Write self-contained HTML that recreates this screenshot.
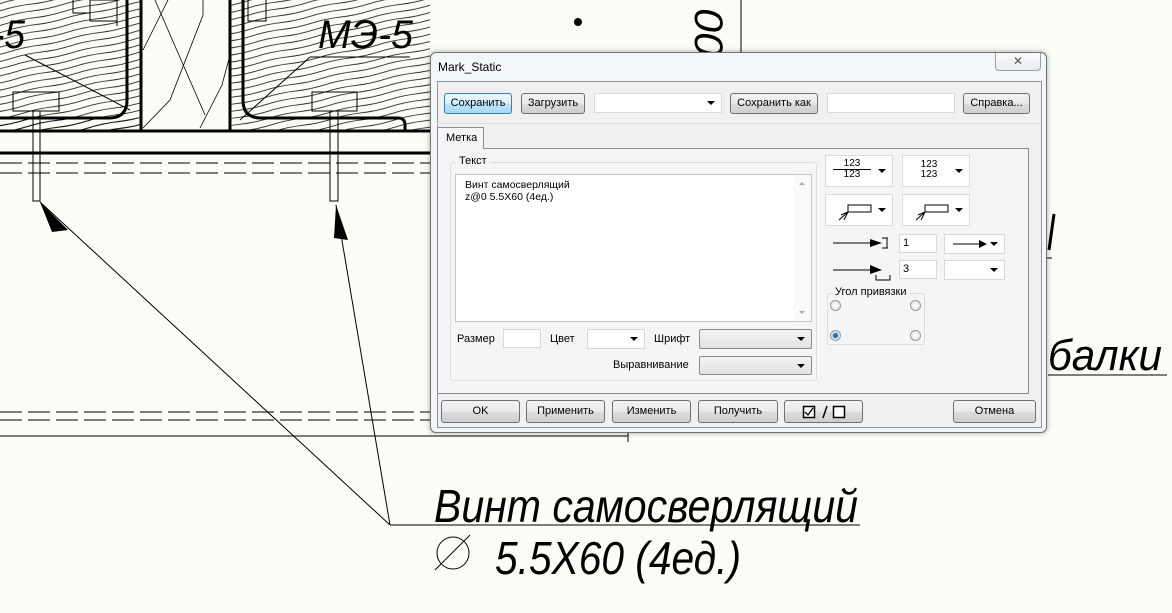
<!DOCTYPE html>
<html><head><meta charset="utf-8">
<style>
*{margin:0;padding:0;box-sizing:border-box}
body{width:1172px;height:613px;overflow:hidden;background:#fdfdf8;position:relative;font-family:"Liberation Sans",sans-serif;font-size:11px;color:#000}
svg.d{position:absolute;left:0;top:0}
.a{position:absolute}
.win{position:absolute;left:430px;top:52px;width:617px;height:381px;border:1px solid #6f7378;border-radius:6px;background:#f3f6fa;box-shadow:0 0 6px rgba(0,0,0,.35)}
.btn{position:absolute;border:1px solid #707070;border-radius:3px;background:linear-gradient(#f2f2f2,#ebebeb 50%,#dddddd 51%,#cfcfcf);text-align:center;font-size:11px;line-height:19px}
.fld{position:absolute;background:#fff;border:1px solid #d6d9dd}
.cmb{position:absolute;background:#fff;border:1px solid #d6d9dd}
.cmb:after,.tri:after{content:"";position:absolute;right:6px;top:50%;margin-top:-2px;border-left:4px solid transparent;border-right:4px solid transparent;border-top:4px solid #000}
.cmbg{position:absolute;border:1px solid #8a8a8a;border-radius:2px;background:linear-gradient(#f3f3f3,#e2e2e2)}
.cmbg:after{content:"";position:absolute;right:6px;top:50%;margin-top:-2px;border-left:4px solid transparent;border-right:4px solid transparent;border-top:4px solid #000}
.ib{position:absolute;background:#fff;border:1px solid #dcdcdc}
.rad{position:absolute;width:11px;height:11px;border-radius:50%;border:1px solid #9a9a9a;background:radial-gradient(#fff,#e0e0e0)}
</style></head><body>
<svg class="d" width="1172" height="613" viewBox="0 0 1172 613">
<defs>
<pattern id="h" width="60" height="7" patternUnits="userSpaceOnUse" patternTransform="rotate(-12)">
<path d="M0 3.5 Q15 2 30 3.5 T60 3.5" stroke="#000" stroke-width="0.8" fill="none"/>
</pattern>
</defs>
<rect x="0" y="0" width="141" height="131" fill="url(#h)"/>
<rect x="230" y="0" width="200" height="131" fill="url(#h)"/>
<rect x="0" y="118" width="141" height="13" fill="url(#h)"/>
<g stroke="#000" fill="none">
<path d="M127 0 V100 Q127 118 109 118 H0" stroke-width="3"/>
<path d="M243 0 V100 Q243 118 261 118 H398 Q405 118 405 125 V131" stroke-width="3"/>
<path d="M141 0 V131 M230 0 V131" stroke-width="3"/>
<path d="M0 131 H430 M0 153 H430" stroke-width="3"/>
<path d="M0 163 H430 M0 173 H430 M0 412 H430 M0 420 H430" stroke-width="1" stroke-dasharray="22,6"/>
<path d="M0 436 H628 M628 433 V442 M741 0 V52" stroke-width="1"/>
<rect x="13" y="92" width="46" height="19" stroke-width="1"/>
<rect x="312" y="92" width="45" height="19" stroke-width="1"/>
<rect x="90" y="0" width="27" height="21" stroke-width="1"/>
<path d="M73 0 V13 H90 M117 0 V26" stroke-width="1"/>
<rect x="248" y="-1" width="18" height="22" stroke-width="1"/>
<path d="M33 111 V201 H40 V111 M330 111 V201 H338 V111" stroke-width="1"/>
<path d="M40 202 L390 525 M336 205 L390 525 M390 525 H860" stroke-width="1"/>
<path d="M25 55 L130 110 M310 57 H410 M310 57 L240 120" stroke-width="1"/>
<path d="M155 0 L205 115 M168 0 L143 50 M203 0 V15 L170 100 L143 128 M230 55 L222 85 L200 128" stroke-width="0.8"/>
<path d="M1045 258 H1052 M1048 375 H1167" stroke-width="1"/>
<path d="M1054 214 L1049 250" stroke-width="3"/>
<circle cx="453" cy="553" r="16" stroke-width="1"/>
<path d="M435 570 L470 535" stroke-width="1"/>
</g>
<path d="M40 202 L68 230 L52 232 Z M336 205 L348 240 L334 238 Z" fill="#000"/>
<circle cx="578" cy="22" r="4" fill="#000"/>
<g font-family="Liberation Sans,sans-serif" font-style="italic" fill="#000">
<text x="318" y="48" font-size="40" textLength="95" lengthAdjust="spacingAndGlyphs">МЭ-5</text>
<text x="-8" y="48" font-size="40" textLength="33" lengthAdjust="spacingAndGlyphs">-5</text>
<text x="434" y="522" font-size="46" textLength="424" lengthAdjust="spacingAndGlyphs">Винт самосверлящий</text>
<text x="495" y="574" font-size="46" textLength="246" lengthAdjust="spacingAndGlyphs">5.5X60 (4ед.)</text>
<text x="1048" y="370" font-size="44" textLength="114" lengthAdjust="spacingAndGlyphs">балки</text>
<text transform="translate(695,8) rotate(90)" font-size="40" textLength="48" lengthAdjust="spacingAndGlyphs">00</text>
</g>
</svg>

<div class="win">
<div class="a" style="left:7px;top:7px;font-size:12px">Mark_Static</div>
<div class="a" style="left:564px;top:0;width:46px;height:18px;border:1px solid #9aa0a8;border-top:none;border-radius:0 0 4px 4px;background:linear-gradient(#fbfbfb,#e8ecf0);text-align:center;font-size:12px;color:#555;line-height:17px">✕</div>
<div class="a" style="left:6px;top:28px;width:605px;height:347px;background:#f0f0f0;border:1px solid #8e959d"></div>
</div>
<div class="btn" style="left:444px;top:93px;width:68px;height:21px;border-color:#3c7fb1;background:linear-gradient(#eaf6fd,#d9f0fc 50%,#bee6fd 51%,#a7d9f5)">Сохранить</div>
<div class="btn" style="left:521px;top:93px;width:64px;height:21px">Загрузить</div>
<div class="cmb" style="left:594px;top:93px;width:128px;height:20px"></div>
<div class="btn" style="left:730px;top:93px;width:88px;height:21px">Сохранить как</div>
<div class="fld" style="left:827px;top:93px;width:128px;height:20px"></div>
<div class="btn" style="left:963px;top:93px;width:67px;height:21px">Справка...</div>
<div class="a" style="left:437px;top:123px;width:604px;height:1px;background:#dcdcdc"></div>
<div class="a" style="left:437px;top:148px;width:592px;height:246px;border:1px solid #898c95;background:#f5f5f5"></div>
<div class="a" style="left:437px;top:127px;width:47px;height:22px;border:1px solid #898c95;border-bottom:none;background:#f5f5f5;padding:4px 0 0 8px">Метка</div>
<div class="a" style="left:450px;top:162px;width:367px;height:219px;border:1px solid #d5dfe5;border-radius:3px"></div>
<div class="a" style="left:456px;top:155px;background:#f5f5f5;padding:0 3px">Текст</div>
<div class="fld" style="left:455px;top:174px;width:357px;height:148px;border-color:#c5c5c5;padding:4px 0 0 9px;line-height:12px;font-size:10.5px">Винт самосверлящий<br>z@0 5.5X60 (4ед.)
<div class="a" style="right:0;top:0;width:17px;height:146px;background:#fafafa"><div class="a" style="left:5px;top:7px;border-left:3px solid transparent;border-right:3px solid transparent;border-bottom:3px solid #aaa"></div><div class="a" style="left:5px;bottom:7px;border-left:3px solid transparent;border-right:3px solid transparent;border-top:3px solid #aaa"></div></div></div>
<div class="a" style="left:457px;top:333px">Размер</div>
<div class="fld" style="left:503px;top:329px;width:38px;height:19px"></div>
<div class="a" style="left:550px;top:333px">Цвет</div>
<div class="cmb" style="left:587px;top:329px;width:58px;height:20px"></div>
<div class="a" style="left:654px;top:333px">Шрифт</div>
<div class="cmbg" style="left:699px;top:329px;width:113px;height:20px"></div>
<div class="a" style="left:613px;top:359px">Выравнивание</div>
<div class="cmbg" style="left:699px;top:356px;width:113px;height:19px"></div>

<div class="ib tri" style="left:825px;top:155px;width:68px;height:32px"><div class="a" style="left:6px;top:3px;width:40px;text-align:center;font-size:10px;line-height:10px">123<div style="border-top:1px solid #000;margin:0 1px"></div>123</div></div>
<div class="ib tri" style="left:902px;top:155px;width:68px;height:32px"><div class="a" style="left:6px;top:4px;width:40px;text-align:center;font-size:10px;line-height:10px">123<br>123</div></div>
<div class="ib tri" style="left:825px;top:194px;width:68px;height:32px"><svg class="a" style="left:10px;top:7px" width="40" height="20"><path d="M12 10 H35 V3 H12 V10 M12 10 L3 18 M12 10 L5 13 M12 10 L8 18" stroke="#000" fill="none" stroke-width="1"/></svg></div>
<div class="ib tri" style="left:902px;top:194px;width:68px;height:32px"><svg class="a" style="left:10px;top:7px" width="40" height="20"><path d="M12 10 H35 V3 H12 V10 M12 10 L3 18 M12 10 L5 13 M12 10 L8 18" stroke="#000" fill="none" stroke-width="1"/></svg></div>
<svg class="a" style="left:830px;top:234px" width="65" height="48"><path d="M3 9 H50 M57 4 V14 M52 4 H58 M52 14 H58 M3 36 H50 M46 41 V46 H60 V41" stroke="#000" fill="none"/><path d="M40 5 L52 9 L40 13 Z M40 31 L52 36 L40 40 Z" fill="#000"/></svg>
<div class="fld" style="left:899px;top:234px;width:38px;height:19px;padding:2px 0 0 3px">1</div>
<div class="cmb" style="left:944px;top:234px;width:61px;height:20px"><svg class="a" style="left:8px;top:4px" width="40" height="10"><path d="M0 5 H30" stroke="#000"/><path d="M26 1 L34 5 L26 9 Z" fill="#000"/></svg></div>
<div class="fld" style="left:899px;top:260px;width:38px;height:19px;padding:2px 0 0 3px">3</div>
<div class="cmb" style="left:944px;top:260px;width:61px;height:20px"></div>
<div class="a" style="left:827px;top:293px;width:98px;height:52px;border:1px solid #dcdcdc;border-radius:3px"></div>
<div class="a" style="left:833px;top:286px;background:#f5f5f5;padding:0 2px">Угол привязки</div>
<div class="rad" style="left:830px;top:300px"></div>
<div class="rad" style="left:910px;top:300px"></div>
<div class="rad" style="left:830px;top:330px;background:radial-gradient(#1a6fb8 30%,#9bc9ec 45%,#e6e6e6 55%)"></div>
<div class="rad" style="left:910px;top:330px"></div>

<div class="btn" style="left:441px;top:400px;width:79px;height:23px;line-height:21px">OK</div>
<div class="btn" style="left:526px;top:400px;width:79px;height:23px;line-height:21px">Применить</div>
<div class="btn" style="left:612px;top:400px;width:79px;height:23px;line-height:21px">Изменить</div>
<div class="btn" style="left:698px;top:400px;width:80px;height:23px;line-height:21px">Получить</div>
<div class="btn" style="left:784px;top:400px;width:79px;height:23px"><svg class="a" style="left:17px;top:4px" width="44" height="14"><rect x="1.5" y="1.5" width="11" height="11" fill="#fff" stroke="#000" stroke-width="1.5"/><path d="M3 7 L6 10 L11 3" stroke="#000" fill="none" stroke-width="1.3"/><path d="M21 13 L25 1" stroke="#000" stroke-width="1.5"/><rect x="31.5" y="1.5" width="11" height="11" fill="#fff" stroke="#000" stroke-width="1.5"/></svg></div>
<div class="btn" style="left:953px;top:400px;width:83px;height:23px;line-height:21px">Отмена</div>
</body></html>
